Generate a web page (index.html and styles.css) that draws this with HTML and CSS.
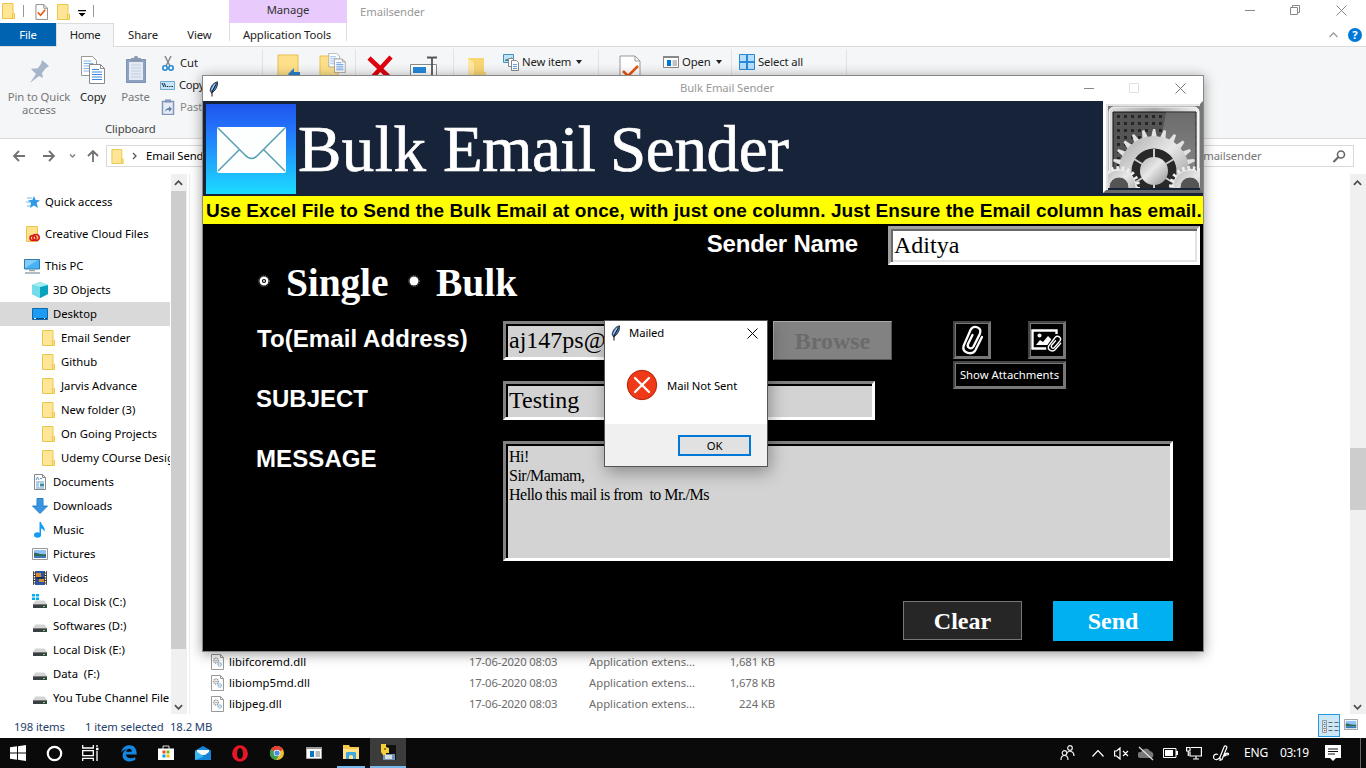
FILE: index.html
```html
<!DOCTYPE html>
<html lang="en">
<head>
<meta charset="utf-8">
<title>Bulk Email Sender</title>
<link rel="stylesheet" href="styles.css">
</head>
<body>
<svg class="defs" width="0" height="0">
  <defs>
    <symbol id="folder" viewBox="0 0 14 16"><path d="M.5.5h10.500v10h1.500v5H.5z" fill="#ffe596" stroke="#ebc54b"/><path d="M10.500 10.500v4.500" stroke="#ebc54b" fill="none"/></symbol>
    <symbol id="feather" viewBox="0 0 10 16"><path d="M8.500.8C5 1.500 1.500 5 1.200 9.500L2.600 12C6 10 9 6 8.500.8z" fill="#4a86d0" stroke="#111" stroke-width=".8"/><path d="M7.500 2.500 3 11v4.500" stroke="#111" stroke-width="1" fill="none"/><path d="M6 3 2.500 9" stroke="#b9d7f5" fill="none"/></symbol>
    <symbol id="drive" viewBox="0 0 16 16"><path d="M3.500 6.500h9l2.500 3.500H1z" fill="#d4d4d4"/><path d="M1 10h14v4H1z" fill="#3c3f42"/><path d="M1 10h14v1H1z" fill="#777"/><rect x="11" y="12" width="2" height="1" fill="#4f4"/></symbol>
    <symbol id="picture" viewBox="0 0 16 12"><path d="M.5.5h15v11H.5z" fill="#fff" stroke="#999"/><path d="M2 2h12v8H2z" fill="#8fc3f5"/><path d="M2 5c3-1 5 2 12 1v2H2z" fill="#2f6b58"/><path d="M2 8h12v2H2z" fill="#3c79b4"/></symbol>
    <symbol id="pages" viewBox="0 0 24 28"><path d="M.5.5h11l4 4v15H.5z" fill="#fff" stroke="#999"/><path d="M2.500 5h8M2.500 7.500h10M2.500 10h6M2.500 12.500h6M2.500 15h6" stroke="#82b3e8"/><path d="M8.500 8.500h11l4 4v15h-15z" fill="#fff" stroke="#888"/><path d="M19.500 8.500v4h4" fill="none" stroke="#888"/><path d="M11 13.500h7M11 16h10M11 18.500h10M11 21h10M11 23.500h10" stroke="#3b86dd"/></symbol>
    <symbol id="check" viewBox="0 0 14 17"><path d="M1 .5h8.500l4 4v12H1z" fill="#fff" stroke="#888"/><path d="M9.500.5v4h4" fill="none" stroke="#888"/><path d="m3 9 3 3 5-6" stroke="#e85d14" stroke-width="1.800" fill="none"/></symbol>
    <symbol id="dll" viewBox="0 0 13 16"><path d="M.5.5h9l3 3v12H.5z" fill="#fff" stroke="#999"/><path d="M9.500.5v3h3" fill="none" stroke="#999"/><circle cx="5" cy="6.500" r="2.400" fill="none" stroke="#8f989f" stroke-width="1.500" stroke-dasharray="1 .6"/><circle cx="5" cy="6.500" r=".8" fill="#888"/><circle cx="8.700" cy="10.500" r="1.800" fill="#cfe6f7" stroke="#6e9dbd" stroke-dasharray="1 .5"/></symbol>
    <symbol id="clip" viewBox="0 0 24 32"><path d="m22 13-6.500 13c-3 5.500-13.500 3.500-12-4L10.500 6c3-5.500 11.500-3 9.500 3.500l-6.500 13c-2 3.500-7 1.500-5.500-2.500l4.500-9" fill="none" stroke="#fff" stroke-width="2.300" stroke-linecap="round"/></symbol>
    <symbol id="chev" viewBox="0 0 10 6"><path d="m1 5 4-4 4 4" fill="none" stroke="#505050" stroke-width="2"/></symbol>
    <symbol id="x" viewBox="0 0 11 11"><path d="m.5.5 10 10m0-10-10 10" fill="none" stroke="currentColor"/></symbol>
    <path id="tooth" d="M42.800 33 44.800 23h2.400l2 10z"/>
    <g id="teeth"><use href="#tooth"/><use href="#tooth" transform="rotate(15 46 65)"/><use href="#tooth" transform="rotate(30 46 65)"/></g>
  </defs>
</svg>

<main class="explorer">
  <header class="top">
    <div class="quick">
      <svg width="14" height="16"><use href="#folder"/></svg><i class="bar"></i>
      <svg class="q2" width="13" height="16"><use href="#check"/></svg>
      <svg class="q3" width="14" height="16"><use href="#folder"/></svg>
      <svg class="q4" width="8" height="7"><path d="M0 0h8v1.300H0zM.5 3h7L4 6.500z"/></svg><i class="bar b2"></i>
    </div>
    <div class="manage">Manage</div>
    <div class="wtitle">Emailsender</div>
    <div class="winbtns">
      <svg width="10" height="11"><path d="M0 5.500h10" stroke="#888"/></svg>
      <svg width="11" height="11" fill="none" stroke="#888"><path d="M.5 2.500h7v7h-7zM2.500 2.500v-2h7v7h-2"/></svg>
      <svg width="11" height="11"><use href="#x"/></svg>
    </div>
  </header>
  <nav class="tabs">
    <span class="file">File</span><span class="home">Home</span><span class="share">Share</span><span class="view">View</span><span class="app">Application Tools</span>
    <span class="help"><svg width="9" height="6" fill="none" stroke="#999" stroke-width="1.300"><path d="m.5 5 4-4 4 4"/></svg><b>?</b></span>
  </nav>
  <section class="ribbon">
    <div class="group clipboard">
      <div class="tools">
        <div class="tool pin"><svg width="24" height="28" viewBox="0 0 24 28"><path d="m15 4 7 6-3 2-4 5 1 5-4-2-9 7 6-9-5-5c3-1 5 0 7-1l3-4z" fill="#a7b5cb"/></svg><span>Pin to Quick access</span></div>
        <div class="tool copy"><svg width="24" height="28"><use href="#pages"/></svg><span>Copy</span></div>
        <div class="tool paste"><svg width="22" height="29"><path d="M1.500 4.500h19v23h-19z" fill="#8ea1c3" stroke="#7d90b5"/><path d="M4 7h14v18H4z" fill="#e4eaf4"/><path d="M6 10h10M6 13h10M6 16h10M6 19h10M6 22h10" stroke="#c0cde0"/><path d="M6 3h3c0-3 4-3 4 0h3v4H6z" fill="#8b99b0"/></svg><span>Paste</span></div>
        <div class="small">
          <div><svg width="14" height="16" fill="none"><path d="m4 1 5 10M10 1 5 11" stroke="#828a91" stroke-width="1.500"/><circle cx="4" cy="13" r="2.200" stroke="#2689cf" stroke-width="1.600"/><circle cx="10" cy="13" r="2.200" stroke="#2689cf" stroke-width="1.600"/></svg>Cut</div>
          <div class="cpath"><svg width="15" height="16"><path d="M.5 4.500h14v8H.5z" fill="#c7e6fb" stroke="#6ea9d0"/><path d="m2 6 2 4m0-4 2 4M7 9.500h1.300m1 0h1.200m1 0H13" stroke="#123" fill="none"/></svg>Copy path</div>
          <div class="dim"><svg width="14" height="16"><path d="M1.500 2.500h11v13h-11z" fill="#e6ecf6" stroke="#8196b9" stroke-width="1.500"/><path d="M4 .5h6v3H4z" fill="#8196b9"/><path d="M4 13c0-3 2-4 4-4V7l3 3-3 3v-2c-2 0-3 0-4 2z" fill="#667fab"/></svg>Paste shortcut</div>
        </div>
      </div>
      <div class="gname">Clipboard</div>
    </div>
    <div class="group g2"><svg width="23" height="30"><path d="M1 2h20v28H1z" fill="#ffe08a" stroke="#e8bf50"/><path d="m11 21 6-6v4h6v5h-6v4z" fill="#2b82cf"/></svg><svg width="28" height="30"><path d="M1 3h18v27H1z" fill="#ffe08a" stroke="#e8bf50"/><svg x="9" width="18" height="20"><use href="#pages"/></svg></svg></div>
    <div class="group g3"><svg width="26" height="26"><path d="m2 3 22 21M24 2 3 25" stroke="#e1000f" stroke-width="4.500"/></svg><svg width="28" height="26"><path d="M.5 9.500h26v16H.5z" fill="#fff" stroke="#888"/><path d="M3 12h13v6H3z" fill="#2588dc"/><path d="M17 2.500h4l1 1 1-1h4M22 3v22" fill="none" stroke="#555" stroke-width="1.800"/></svg></div>
    <div class="group g4"><svg width="18" height="26"><path d="M0 2h16v14h2v10H0z" fill="#f8d673"/><path d="m0 2 6 5v19H0z" fill="#ffe8a0"/></svg>
      <span class="cmd"><svg width="16" height="17"><path d="M.5.5h10v8H.5z" fill="#bfe2ff" stroke="#4590b8"/><path d="M2 6c2-2 4 0 7-3v4H2z" fill="#3d8b6d"/><path d="M5.500 4.500h5v8h-5z" fill="#fff" stroke="#888"/><path d="M8.500 6.500h5l2 2v8h-7z" fill="#fff" stroke="#888"/><path d="M10 10.500h4m-4 2h4m-4 2h4" stroke="#67a0df"/></svg>New item<i class="tri"></i></span></div>
    <div class="group g5"><svg width="22" height="26"><path d="M1 1h15l5 5v20H1z" fill="#fff" stroke="#999"/><path d="M16 1v5h5" fill="none" stroke="#999"/><path d="m4 16 5 5 10-10" stroke="#e8560d" stroke-width="2.500" fill="none"/></svg>
      <span class="cmd"><svg width="16" height="14"><path d="M.5 2h15v10.500H.5z" fill="#fff" stroke="#888"/><path d="M0 1h16v2H0z" fill="#888"/><path d="M4 5h4v6H4z" fill="#0078d7"/><path d="M9.500 6H14m-4.500 2H14m-4.500 2H14" stroke="#888"/></svg>Open<i class="tri"></i></span></div>
    <div class="group g6"><span class="cmd"><svg width="16" height="16"><path d="M.5.5h15v15H.5z" fill="#b7dffc" stroke="#2689d9"/><path d="M8 0v16M0 8h16" stroke="#2689d9" stroke-width="2"/></svg>Select all</span></div>
  </section>
  <section class="address">
    <svg class="nav-arrows" width="106" height="34" fill="none" stroke="#727272" stroke-width="1.800"><path d="M25 17H14m5-5-5 5 5 5M43 17h11m-5-5 5 5-5 5M93 23V12m-5 5 5-5 5 5"/><path d="m70 15.500 2.500 2.500 2.500-2.500" stroke-width="1.200"/></svg>
    <div class="path"><svg width="14" height="15"><use href="#folder"/></svg><svg width="5" height="8"><path d="m1 1 3 3-3 3" fill="none" stroke="#555" stroke-width="1.300"/></svg><span>Email Sender</span></div>
    <div class="search"><span>Search Emailsender</span><svg width="13" height="13" fill="none" stroke="#666"><circle cx="8" cy="4.500" r="3.500" stroke-width="1.600"/><path d="m5.500 7-5 5" stroke-width="2"/></svg></div>
  </section>
  <section class="content">
    <div class="tree">
      <div class="item l0 gap"><svg width="16" height="16"><path d="m9 2 1.700 4 4.300.2-3.300 2.900L13 14l-4-2.400L5 14l1-5-3-2.700 4.300-.3z" fill="#2f9be8"/><path d="M2 4h5M1 8h4M2 12h4" stroke="#6eb8ec"/></svg>Quick access</div>
      <div class="item l0 gap"><svg width="16" height="16"><path d="M1.500.5h11v15h-11z" fill="#ffe38c" stroke="#ebc54b"/><ellipse cx="8" cy="12" rx="3" ry="2.500" fill="none" stroke="#d8171f" stroke-width="1.600"/><ellipse cx="11" cy="11.500" rx="3.200" ry="3" fill="none" stroke="#d8171f" stroke-width="1.600"/></svg>Creative Cloud Files</div>
      <div class="item l0 pc"><svg width="17" height="16"><path d="M.5 1.500h15v9.500H.5z" fill="#47b3f6" stroke="#337ca9"/><path d="M1 10 14 2H1z" fill="#83cdfa"/><path d="M5 12.500h6M1 15h15" stroke="#9aa5ae" stroke-width="1.300"/></svg>This PC</div>
      <div class="item l1"><svg width="16" height="16"><path d="m8 0 8 3v9l-8 4-8-4V3z" fill="#36bcd2"/><path d="m8 5 8-2v9l-8 4z" fill="#09a3bd"/><path d="m0 3 8 2v11l-8-4z" fill="#72dce8"/><path d="m8 0 8 3-8 2-8-2z" fill="#a2edf3"/></svg>3D Objects</div>
      <div class="item l1 on"><svg width="16" height="16"><path d="M.5 2.500h15v11H.5z" fill="#1d9cf5" stroke="#1269aa"/><path d="M1 12.500h14" stroke="#0b4c82"/><path d="M2 12.500h2m8 0h1" stroke="#fff"/></svg>Desktop</div>
      <div class="item l2"><svg width="14" height="16"><use href="#folder"/></svg>Email Sender</div>
      <div class="item l2"><svg width="14" height="16"><use href="#folder"/></svg>Github</div>
      <div class="item l2"><svg width="14" height="16"><use href="#folder"/></svg>Jarvis Advance</div>
      <div class="item l2"><svg width="14" height="16"><use href="#folder"/></svg>New folder (3)</div>
      <div class="item l2"><svg width="14" height="16"><use href="#folder"/></svg>On Going Projects</div>
      <div class="item l2"><svg width="14" height="16"><use href="#folder"/></svg>Udemy COurse Design</div>
      <div class="item l1"><svg width="16" height="16"><path d="M2.500.5h8l3 3v12h-11z" fill="#fff" stroke="#888"/><path d="M10.500.5v3h3" fill="none" stroke="#888"/><path d="m4 6 1.500-3L7 6M8 4.500h2M4 8h8M4 10h3m-3 2h3m-3 2h8" stroke="#5a9bc9" fill="none"/><path d="M8 9.500h4v3H8z" fill="#438aaa"/></svg>Documents</div>
      <div class="item l1"><svg width="16" height="16"><path d="M5 .5h6V8h4.500L8 15.500.5 8H5z" fill="#3795e2" stroke="#267fc7"/></svg>Downloads</div>
      <div class="item l1"><svg width="16" height="16"><ellipse cx="5.500" cy="13" rx="3.500" ry="2.700" fill="#119df5"/><path d="M7.500 0H9c0 3 5 5 3.500 10-.5-2-1.500-3-3.500-3.500V13H7.500z" fill="#119df5"/></svg>Music</div>
      <div class="item l1"><svg width="16" height="12"><use href="#picture"/></svg>Pictures</div>
      <div class="item l1"><svg width="16" height="16"><path d="M1 1h14v14H1z" fill="#333"/><path d="M4 1h8v14H4z" fill="#2855a8"/><path d="M4 3h5v4H4zM7 9h5v3H7z" fill="#d48c32"/><path d="M4 8h8" stroke="#111"/><path d="M2.500 1v14m11-14v14" stroke="#fff" stroke-width="1.400" stroke-dasharray="1.500 1"/></svg>Videos</div>
      <div class="item l1"><svg width="16" height="16"><use href="#drive"/><path d="M0 0h3v2.500H0zM4 0h3v2.500H4zM0 3.500h3V6H0zM4 3.500h3V6H4z" fill="#00adef"/></svg>Local Disk (C:)</div>
      <div class="item l1"><svg width="16" height="16"><use href="#drive"/></svg>Softwares (D:)</div>
      <div class="item l1"><svg width="16" height="16"><use href="#drive"/></svg>Local Disk (E:)</div>
      <div class="item l1"><svg width="16" height="16"><use href="#drive"/></svg>Data&nbsp; (F:)</div>
      <div class="item l1"><svg width="16" height="16"><use href="#drive"/></svg>You Tube Channel File</div>
    </div>
    <div class="scroll left"><svg width="9" height="6"><use href="#chev"/></svg><i></i><svg class="down" width="9" height="6"><use href="#chev"/></svg></div>
    <div class="files">
      <div class="frow"><svg width="13" height="16"><use href="#dll"/></svg><b>libifcoremd.dll</b><span>17-06-2020 08:03</span><em>Application extens...</em><u>1,681 KB</u></div>
      <div class="frow"><svg width="13" height="16"><use href="#dll"/></svg><b>libiomp5md.dll</b><span>17-06-2020 08:03</span><em>Application extens...</em><u>1,678 KB</u></div>
      <div class="frow"><svg width="13" height="16"><use href="#dll"/></svg><b>libjpeg.dll</b><span>17-06-2020 08:03</span><em>Application extens...</em><u>224 KB</u></div>
    </div>
    <div class="scroll right"><svg width="9" height="6"><use href="#chev"/></svg><i></i><svg class="down" width="9" height="6"><use href="#chev"/></svg></div>
  </section>
  <footer class="status"><span class="s1">198 items</span><span class="s2">1 item selected</span><span class="s3">18.2 MB</span>
    <div class="details"><svg width="17" height="13" fill="none"><path d="M.5.500h4v12h-4zM.5 4.500h4m-4 4h4" stroke="#999"/><path d="M6.500 2.500h4m2 0h4m-10 4h4m2 0h4m-10 4h4m2 0h4" stroke="#666"/><path d="M2 2.500h1.300m-1.300 4h1.300" stroke="#27d"/><path d="M2 10.500h1.300" stroke="#d22"/></svg></div>
    <svg class="thumb" width="14" height="11" viewBox="0 0 16 12" preserveAspectRatio="none"><use href="#picture"/></svg></footer>
</main>

<section class="tk">
  <div class="tkbar"><svg width="10" height="16"><use href="#feather"/></svg><span>Bulk Email Sender</span>
    <div class="tkbtns"><svg width="10" height="11"><path d="M0 5.500h10" stroke="#888"/></svg><svg width="11" height="11"><path d="M.5.5h9v9h-9z" fill="none" stroke="#e1e1e1"/></svg><svg width="11" height="11"><use href="#x"/></svg></div>
  </div>
  <div class="banner">
    <svg class="mail" width="90" height="90"><defs><linearGradient id="sky" x2="0" y2="1"><stop stop-color="#1f55ec"/><stop offset=".25" stop-color="#2270fb"/><stop offset="1" stop-color="#1bdcff"/></linearGradient></defs><path d="M0 0h90v90H0z" fill="url(#sky)"/><rect x="11" y="23" width="69" height="46" rx="2" fill="#fdffff"/><path d="m12 24 27 27q6.500 7 13 0l27-27M12 67l21-21M79 67 58 46" fill="none" stroke="#559eb3" stroke-width="1.500"/></svg>
    <h1><span class="w1">Bulk</span><span class="w2">Email</span><span class="w3">Sender</span></h1>
    <div class="gear"><svg width="93" height="82"><defs><linearGradient id="metal" x2="1" y2="1"><stop stop-color="#b5b5b5"/><stop offset=".45" stop-color="#e8e8e8"/><stop offset="1" stop-color="#909090"/></linearGradient><linearGradient id="shine" x2="0" y2="1"><stop stop-color="#6c6c6c"/><stop offset="1" stop-color="#8c8c8c"/></linearGradient><pattern id="dots" width="7" height="7" patternUnits="userSpaceOnUse"><path d="M0 0h7v7H0z" fill="#555"/><path d="M2 2h3v3H2z" fill="#262626"/></pattern><linearGradient id="edge" x2="1"><stop stop-color="#ddd"/><stop offset=".5" stop-color="#aaa"/><stop offset="1" stop-color="#eee"/></linearGradient></defs>
      <path d="M0 0h93v82H0z" fill="#777"/><rect x="1" y="1" width="90" height="90" rx="5" fill="url(#edge)" stroke="#fff"/><path d="M5 6h83v76H5z" fill="url(#dots)" stroke="#111"/><path d="M58 6.500h29.500V82H50Q50 45 58 6.500z" fill="url(#shine)"/>
      <g fill="#e2e2e2"><use href="#teeth"/><use href="#teeth" transform="rotate(45 46 65)"/><use href="#teeth" transform="rotate(90 46 65)"/><use href="#teeth" transform="rotate(270 46 65)"/><use href="#teeth" transform="rotate(315 46 65)"/></g>
      <circle cx="46" cy="65" r="28.500" fill="none" stroke="url(#metal)" stroke-width="13"/>
      <circle cx="46" cy="65" r="22.500" fill="#292929"/><path d="M46 43v44M26 53l40 24M66 53 26 77" stroke="#ccc" stroke-width="2"/><circle cx="46" cy="65" r="14" fill="url(#metal)"/>
      <g fill="url(#metal)" stroke="#eee"><circle cx="11" cy="81" r="17"/><circle cx="82" cy="81" r="17"/></g><g fill="none" stroke="#eee" stroke-width="4" stroke-dasharray="2.500 2.900"><circle cx="11" cy="81" r="19"/><circle cx="82" cy="81" r="19"/></g><g fill="#555" stroke="#ddd"><circle cx="11" cy="81" r="10"/><circle cx="82" cy="81" r="10"/></g></svg></div>
  </div>
  <div class="notice">Use Excel File to Send the Bulk Email at once, with just one column. Just Ensure the Email column has email.</div>
  <div class="form">
    <div class="sender"><label>Sender Name</label><div class="entry white">Aditya</div></div>
    <div class="modes"><svg width="12" height="12"><circle cx="6" cy="6" r="5.400" fill="#000" stroke="#777" stroke-dasharray="1 1"/><circle cx="6" cy="6" r="3.300" fill="#000" stroke="#fff" stroke-width="2.400"/><circle cx="6" cy="6" r=".9" fill="#fff"/></svg><span class="single">Single</span><svg width="12" height="12"><circle cx="6" cy="6" r="5.400" fill="#000" stroke="#777" stroke-dasharray="1 1"/><circle cx="6" cy="6" r="4.500" fill="#fff"/></svg><span>Bulk</span></div>
    <div class="upper">
      <div class="fields">
        <div class="field"><label class="lto">To(Email Address)</label><div class="entry to">aj147ps@</div><div class="browse">Browse</div></div>
        <div class="field"><label class="lsub">SUBJECT</label><div class="entry subject">Testing</div></div>
      </div>
      <div class="attach">
        <div class="ibtns"><div class="ibtn"><svg width="24" height="32"><use href="#clip"/></svg></div><div class="ibtn"><svg width="32" height="28"><path d="M1.500 4.500h24v18h-24z" fill="none" stroke="#fff" stroke-width="2.400"/><circle cx="8.500" cy="9.500" r="2" fill="#fff"/><path d="m5 19 4-5 3 2 5-6 4 4-4 5z" fill="#fff"/><path d="m15 21 9-13h8v15l-9 5h-7z" fill="#000"/><svg x="15" y="8" width="17" height="19" viewBox="0 0 24 32"><g transform="rotate(14 12 16)"><use href="#clip"/></g></svg></svg></div></div>
        <div class="show">Show Attachments</div>
      </div>
    </div>
    <div class="field msg"><label class="lmsg">MESSAGE</label><div class="entry message">Hi!<br>Sir/Mamam,<br>Hello this mail is from&nbsp; to Mr./Ms</div></div>
    <div class="actions"><div class="clear">Clear</div><div class="send">Send</div></div>
  </div>
</section>

<section class="dialog">
  <div class="dbar"><svg width="10" height="16"><use href="#feather"/></svg><span>Mailed</span><svg class="dx" width="11" height="11"><use href="#x"/></svg></div>
  <div class="dbody"><svg width="32" height="32"><circle cx="16" cy="16" r="14.700" fill="#f03a17" stroke="#b3200d"/><path d="m9 9 14 14m0-14L9 23" stroke="#fff" stroke-width="2.300" stroke-linecap="round"/></svg><span>Mail Not Sent</span></div>
  <div class="dfoot"><div class="ok">OK</div></div>
</section>

<footer class="taskbar">
  <div class="cell"><svg width="16" height="16" fill="#fff"><path d="M0 2.300 7 1.300v6.200H0zM8 1.200 16 0v7.500H8zM0 8.500h7v6.200l-7-1zM8 8.500h8V16l-8-1.200z"/></svg></div>
  <div class="cell"><svg width="17" height="17"><circle cx="8.500" cy="8.500" r="6.700" fill="none" stroke="#fff" stroke-width="2.200"/></svg></div>
  <div class="cell"><svg width="17" height="16" fill="none" stroke="#fff" stroke-width="1.300"><path d="M.7 0v3h10.600V0M.7 5.700h10.600v5H.7zM.7 16v-2.700h10.600V16M15 0v2m0 4v10"/><path d="M14 4h2.500" stroke-width="2.500"/></svg></div>
  <div class="cell"><svg width="16" height="17" viewBox="0 0 16 17"><path d="M.3 7.500C1 2.500 4.500.3 8.300.3c5 0 7.500 3.500 7.400 9.200H5c.2 4 5.500 4.800 9.200 2.500V15C8 18 1.300 16 1.600 10c.2-2.700 1.900-4.600 4.400-5.700C3.500 4.500 1.500 5.500.3 7.500zM5.200 6.700h5.600C11 2.700 5.600 3 5.200 6.700z" fill="#1687e0" fill-rule="evenodd"/></svg></div>
  <div class="cell"><svg width="16" height="16"><path d="M5 4V1h6v3" fill="none" stroke="#ddd"/><path d="M0 3.500h16V15H0z" fill="#fff"/><path d="M4.500 5.500h3v3h-3z" fill="#f25022"/><path d="M8.500 5.500h3v3h-3z" fill="#7fba00"/><path d="M4.500 9.500h3v3h-3z" fill="#00a4ef"/><path d="M8.500 9.500h3v3h-3z" fill="#ffb900"/></svg></div>
  <div class="cell"><svg width="16" height="16"><path d="M0 5.500 8 1l8 4.500V15H0z" fill="#1385d8"/><path d="M2 5h12v5H2z" fill="#f4f9fc"/><path d="m0 5.500 9 6L0 15z" fill="#35b8f2"/><path d="m16 5.500-8 6 8 3.500z" fill="#1583d3"/></svg></div>
  <div class="cell"><svg width="16" height="17"><ellipse cx="8" cy="8.500" rx="7.900" ry="8.300" fill="#e61627"/><ellipse cx="8" cy="8.500" rx="3" ry="5.500" fill="#080808"/></svg></div>
  <div class="cell"><svg width="14" height="14" viewBox="0 0 16 16"><circle cx="8" cy="8" r="8" fill="#eac32b"/><path d="M8 8 1 4a8 8 0 0 1 14 0z" fill="#e34135"/><path d="m8 8-7-4a8 8 0 0 0 6 12l4-6z" fill="#3a9c50"/><circle cx="8" cy="8" r="3.800" fill="#fff"/><circle cx="8" cy="8" r="3" fill="#4b8bea"/></svg></div>
  <div class="cell"><svg width="16" height="12"><path d="M.5.5h15v11H.5z" fill="#fff" stroke="#aaa"/><path d="M0 0h16v2H0z" fill="#999"/><path d="M4 4h4v6H4z" fill="#0875c2"/><path d="M9.500 5H14m-4.500 2H14m-4.500 2H14" stroke="#777"/></svg></div>
  <div class="cell open"><svg width="16" height="14"><path d="M0 0h6l1 2h9v12H0z" fill="#f6c94b"/><path d="M0 4h16v10H0z" fill="#ffe28a"/><path d="M3 14V8q0-1 1-1h8q1 0 1 1v6h-3v-3q-2-2-4 0v3z" fill="#43a8df"/></svg></div>
  <div class="cell open active"><svg width="16" height="17"><path d="M4 1h12v15H3V7z" fill="#111"/><path d="M3 10h12v6H3z" fill="#7395b3"/><path d="M5 11h7v4H5z" fill="#d7dfe4"/><path d="M1 0h5v3l3 1v5H6v2H3L1 8z" fill="#f7cf37"/><path d="M4 5h2" stroke="#333"/></svg></div>
  <div class="tray">
    <svg class="people" width="15" height="16" fill="none" stroke="#eee" stroke-width="1.200"><circle cx="10" cy="3" r="2.300"/><circle cx="4.500" cy="8" r="2.300"/><path d="M1 15c0-6 7-6 7 0M7 8c2-3 7-2 7 3"/></svg>
    <svg class="caret" width="12" height="7" fill="none" stroke="#fff" stroke-width="1.200"><path d="m.5 6.500 5.500-6 5.500 6"/></svg>
    <svg class="vol" width="15" height="13" fill="none" stroke="#fff" stroke-width="1.200"><path d="M.6 4h2l3.400-3v11L2.600 9h-2zM9 4l5 5m0-5L9 9"/></svg>
    <svg class="cloud" width="17" height="15"><path d="M2 12a3 3 0 0 1 1-6 5 5 0 0 1 9-1 4 4 0 0 1 2 7z" fill="#777"/><path d="m1 1 14 13" stroke="#ddd" stroke-width="1.300"/></svg>
    <svg class="bat" width="15" height="10"><path d="M.5.500h12.500v9H.5z" fill="none" stroke="#fff"/><path d="M2 2h8v6H2zM13 3h2v4h-2z" fill="#fff"/></svg>
    <svg class="mon" width="16" height="14" fill="none" stroke="#fff" stroke-width="1.200"><path d="M5 1.500h10.400v8.500H4V6M7 13h6m-3-3v3M.6 1.500H4V5H.6zM2.300 5v5"/></svg>
    <svg class="pen" width="17" height="16" fill="none" stroke="#fff" stroke-width="1.200"><path d="M5 9.500c-3-1.500-5.500 1.500-4 4 1.500 2 5 1 6-1.500L11 2c1-2 3.500-1 2.700 1L9 14.500l-2 .8.300-2.500M11 11c2-4 5-3 4.500-1.500-.5 1-3-.5-4 2"/></svg>
    <span class="eng">ENG</span><span class="time">03:19</span>
    <svg class="note" width="16" height="16"><path d="M0 0h16v13h-5l-3 3-3-3H0z" fill="#fff"/><path d="M3 4h10M3 6.500h10M3 9h7" stroke="#111"/></svg><i></i>
  </div>
</footer>
</body>
</html>
```
FILE: styles.css
```css
* { box-sizing: border-box; }
body { margin: 0; width: 1366px; height: 768px; overflow: hidden; position: relative; background: #fff; color: #000; font: 11.3px/16px "Noto Sans", "Open Sans", sans-serif; letter-spacing: -.1px; white-space: nowrap; }
svg { display: block; flex: none; }
.defs { position: absolute; }
.explorer { height: 738px; display: flex; flex-direction: column; }

.top { height: 23px; display: flex; align-items: flex-start; position: relative; }
.quick { width: 229px; display: flex; padding: 4px 0 0 2px; }
.quick svg:first-child { margin-top: -1px; }
.bar { width: 1px; height: 12px; background: #999; margin: 1px 0 0 7px; }
.q2 { margin-left: 11px; }
.q3 { margin-left: 9px; }
.q4 { margin: 6px 0 0 7px; }
.b2 { margin-left: 7px; }
.manage { width: 118px; height: 23px; background: #e9cafc; text-align: center; line-height: 20px; color: #333; }
.wtitle { margin-left: 13px; line-height: 24px; color: #999; }
.winbtns { margin-left: auto; width: 121px; display: flex; justify-content: space-between; padding: 5px 19px 0 0; color: #888; }

.tabs { height: 24px; display: flex; border-bottom: 1px solid #dadbdc; line-height: 23px; text-align: center; color: #222; }
.file { width: 56px; background: #0063b1; color: #fff; }
.home { width: 58px; height: 24px; background: #f5f6f7; border: 1px solid #dadbdc; border-bottom: 0; letter-spacing: -.4px; line-height: 22px; }
.share { width: 58px; }
.view { width: 55px; }
.app { width: 118px; margin-left: 2px; padding-right: 2px; border: solid #ddd; border-width: 0 1px; height: 18px; }
.help { margin-left: auto; display: flex; align-items: center; gap: 10px; padding-right: 4px; }
.help b { width: 14px; height: 14px; border-radius: 7px; background: #0078d7; color: #fff; line-height: 14px; }

.ribbon { height: 92px; background: #f5f6f7; border-bottom: 1px solid #dadbdc; display: flex; padding-top: 2px; color: #222; }
.group { border-right: 1px solid #e2e3e4; display: flex; height: 86px; }
.clipboard { width: 263px; flex-direction: column; justify-content: space-between; overflow: hidden; height: 88px; }
.tools { display: flex; }
.tool { display: flex; flex-direction: column; align-items: center; padding-top: 7px; text-align: center; line-height: 13px; }
.tool span { margin-top: 6px; }
.pin { width: 78px; white-space: normal; color: #777; letter-spacing: -.1px; }
.pin span { width: 70px; }
.copy { width: 30px; }
.paste { width: 55px; color: #777; }
.paste svg { margin-top: -1px; }
.paste span { margin-top: 6px; }
.small { padding-top: 3px; margin-left: -2px; line-height: 22px; }
.small div { display: flex; align-items: center; gap: 5px; height: 22px; }
.small .cpath { gap: 4px; letter-spacing: -.3px; margin-left: -1px; }
.small .dim { color: #888; }
.gname { padding-left: 105px; line-height: 16px; color: #444; }
.g2 { width: 93px; padding: 4px 0 0 14px; gap: 19px; }
.g3 { width: 98px; padding: 6px 0 0 11px; gap: 17px; }
.g4 { width: 145px; padding-left: 14px; gap: 17px; }
.g4 > svg { margin-top: 7px; }
.g5 { width: 133px; padding-left: 20px; gap: 22px; }
.g5 > svg { margin-top: 6px; }
.g6 { width: 115px; padding-left: 7px; }
.cmd { display: flex; height: 26px; align-items: center; gap: 3px; letter-spacing: -.15px; }
.tri { border: 3px solid transparent; border-top: 4px solid #222; margin: 3px 0 0 2px; }

.address { height: 35px; padding-bottom: 1px; display: flex; align-items: center; }
.nav-arrows { margin-top: -1px; }
.path { width: 1000px; height: 22px; border: 1px solid #d9d9d9; display: flex; align-items: center; padding-left: 4px; }
.path svg + svg { margin: 0 9px 0 7px; }
.search { width: 183px; margin-left: 65px; height: 22px; border: 1px solid #d9d9d9; display: flex; align-items: center; justify-content: space-between; padding: 0 7px 0 0; color: #777; }
.search span { margin-left: -13px; }

.content { height: 540px; display: flex; }
.tree { width: 171px; padding-top: 16px; overflow: hidden; letter-spacing: 0; }
.item { height: 24px; display: flex; align-items: center; gap: 5px; width: 170px; overflow: hidden; }
.gap { margin-bottom: 8px; }
.l0 { padding-left: 25px; gap: 4px; }
.pc { padding-left: 24px; }
.l1 { padding-left: 32px; }
.l2 { padding-left: 42px; }
.on { background: #d9d9d9; }
.scroll { width: 16px; background: #f0f0f0; display: flex; flex-direction: column; align-items: center; padding: 6px 0; }
.scroll i { width: 15px; background: #cdcdcd; }
.down { transform: rotate(180deg); margin-top: auto; }
.left { padding-right: 1px; padding-bottom: 4px; }
.right { padding-bottom: 4px; padding-right: 1px; }
.left i { height: 458px; margin-top: 5px; flex: none; }
.right i { width: 16px; height: 62px; margin: 262px 0 0 1px; flex: none; }
.files { width: 1161px; margin: 0 0 0 2px; border-left: 1px solid #eee; display: flex; flex-direction: column; justify-content: flex-end; }
.frow { height: 21px; display: flex; align-items: center; padding-left: 21px; color: #6d6d6d; }
.frow b { font-weight: 400; width: 240px; margin-left: 5px; color: #000; letter-spacing: .08px; }
.frow span, .frow em { width: 120px; font-style: normal; letter-spacing: -.15px; }
.frow em { letter-spacing: -.02px; }
.frow u { width: 66px; text-align: right; text-decoration: none; }
.status { height: 24px; display: flex; line-height: 25px; padding-left: 14px; color: #26406b; }
.s1 { width: 71px; }
.s2 { width: 85px; }
.details { margin-left: auto; width: 22px; height: 23px; background: #cce8f6; border: 1px solid #2899dc; padding: 5px 0 0 3px; overflow: hidden; }
.thumb { margin: 5px 8px 0 4px; }

.tk { position: absolute; left: 202px; top: 75px; width: 1002px; height: 577px; border: 1px solid #888; box-shadow: 0 2px 12px rgba(0,0,0,.4); background: #000; display: flex; flex-direction: column; overflow: hidden; }
.tkbar { height: 25px; background: #fff; display: flex; align-items: center; padding-left: 6px; color: #999; }
.tkbar span { width: 95px; margin: -2px 0 0 461px; }
.tkbtns { margin-left: auto; width: 119px; display: flex; justify-content: space-between; padding-right: 17px; color: #777; }
.banner { height: 95px; background: #172339; display: flex; align-items: flex-start; position: relative; }
.mail { margin: 3px 0 0 3px; }
h1 { margin: 0; display: flex; color: #fff; font: 65px/96px "Liberation Serif", serif; padding-left: 2px; -webkit-text-stroke: .7px #fff; }
.w1 { width: 145px; letter-spacing: .5px; }
.w2 { width: 167px; letter-spacing: -.6px; }
.w3 { letter-spacing: -.3px; }
.gear { margin-left: auto; width: 100px; height: 92px; flex: none; border: 3px solid #fff; border-right-color: #777; border-bottom-color: #696969; box-shadow: inset 2px 2px #e3e3e3; padding: 2px 0 0 2px; overflow: hidden; }
.notice { height: 28px; background: #ff0; font: bold 19px/29px "Liberation Sans", sans-serif; letter-spacing: .06px; padding-left: 3px; overflow: hidden; }
.form { flex: 1; display: flex; flex-direction: column; letter-spacing: 0; }
.form label { color: #fff; font: bold 24px/35px "Liberation Sans", sans-serif; }
.entry { height: 39px; background: #d3d3d3; border: 3px solid; border-color: #828282 #fff #fff #828282; box-shadow: inset 2px 2px #000; font: 24px/33px "Liberation Serif", serif; padding-left: 3px; overflow: hidden; }
.sender { display: flex; justify-content: flex-end; padding: 2px 3px 0 0; }
.sender label { letter-spacing: -.2px; }
.sender .entry { width: 312px; margin-left: 30px; background: #fff; border-color: #a0a0a0 #fff #fff #a0a0a0; box-shadow: inset 2px 2px #696969, inset -2px -2px #e3e3e3; }
.modes { height: 40px; margin-top: -3px; display: flex; align-items: center; padding-left: 55px; color: #fff; font: bold 39.500px/40px "Liberation Serif", serif; }
.modes span { margin-left: 16px; padding-top: 1px; }
.modes .single { width: 122px; letter-spacing: -.15px; }
.modes svg { margin-top: -3px; }
.upper { display: flex; margin-top: 19px; padding-left: 53px; }
.fields { width: 636px; display: flex; flex-direction: column; gap: 21px; }
.field { display: flex; height: 39px; }
.field label { width: 247px; }
.field .lto { letter-spacing: .08px; padding-left: 1px; }
.field .lmsg { letter-spacing: .1px; }
.to { width: 260px; }
.subject { width: 372px; }
.browse { width: 119px; margin-left: 10px; background: #828282; border: 1px solid; border-color: #aaa #555 #555 #aaa; color: #6b6b6b; text-align: center; font: bold 24px/38px "Liberation Serif", serif; }
.attach { width: 113px; margin-left: 61px; display: flex; flex-direction: column; gap: 2px; }
.ibtns { display: flex; justify-content: space-between; }
.ibtn { width: 38px; height: 38px; border: 2px solid; border-color: #444 #777 #777 #444; outline: 1px solid #777; outline-offset: -3px; display: flex; align-items: center; justify-content: center; }
.show { height: 28px; border: 2px solid; border-color: #444 #777 #777 #444; outline: 1px solid #777; outline-offset: -3px; color: #fff; text-align: center; line-height: 24px; }
.msg { height: 120px; margin: 21px 0 0 53px; }
.message { width: 670px; height: 120px; font: 16px/19px "Liberation Serif", serif; letter-spacing: -.5px; padding-top: 3px; }
.actions { display: flex; justify-content: flex-end; gap: 31px; padding-right: 30px; margin-top: 40px; color: #fff; font: bold 24px/39px "Liberation Serif", serif; text-align: center; }
.clear { width: 119px; height: 39px; background: #262626; border: 1px solid #777; }
.send { width: 120px; height: 40px; background: #00b0f0; line-height: 41px; }

.dialog { position: absolute; left: 604px; top: 320px; width: 164px; height: 147px; border: 1px solid #555; background: #fff; box-shadow: 2px 5px 16px rgba(0,0,0,.35); display: flex; flex-direction: column; }
.dbar { height: 24px; display: flex; align-items: center; padding: 0 9px 0 6px; }
.dbar span { margin-left: 8px; }
.dx { margin-left: auto; color: #000; }
.dbody { flex: 1; display: flex; align-items: center; padding: 1px 0 0 21px; gap: 9px; }
.dbody span { padding-top: 2px; }
.dfoot { height: 42px; background: #f0f0f0; padding: 11px 16px 0 73px; }
.ok { height: 21px; border: 2px solid #0078d7; background: #e1e1e1; text-align: center; line-height: 18px; }

.taskbar { height: 30px; background: #0a0a0a; display: flex; color: #fff; }
.cell { width: 37px; display: flex; align-items: center; justify-content: center; }
.cell:nth-child(2), .cell:nth-child(1) { width: 36px; }
.cell:nth-child(3) { width: 38px; padding-right: 2px; }
.open { border-bottom: 2px solid #76b9ed; width: 28px; margin: 0 5px 0 5px; }
.active { background: #3c3c3c; width: 36px; margin: 0; }
.tray { margin-left: auto; width: 306px; display: flex; align-items: center; font-size: 12px; }
.caret { margin-left: 17px; }
.vol { margin-left: 10px; }
.cloud { margin-left: 9px; }
.bat { margin-left: 8px; }
.mon { margin-left: 8px; }
.pen { margin-left: 11px; }
.eng { margin-left: 14px; width: 36px; }
.time { width: 45px; letter-spacing: -.4px; }
.tray i { width: 1px; height: 30px; background: #666; margin-left: 19px; }
```
